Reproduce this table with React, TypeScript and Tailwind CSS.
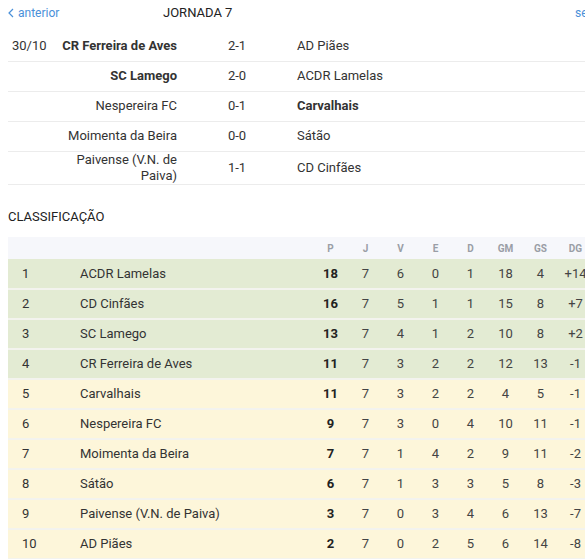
import React from "react";

const matches = [
  { date: "30/10", home: "CR Ferreira de Aves", score: "2-1", away: "AD Piães", win: "home" },
  { date: "", home: "SC Lamego", score: "2-0", away: "ACDR Lamelas", win: "home" },
  { date: "", home: "Nespereira FC", score: "0-1", away: "Carvalhais", win: "away" },
  { date: "", home: "Moimenta da Beira", score: "0-0", away: "Sátão", win: "" },
  { date: "", home: "Paivense (V.N. de Paiva)", score: "1-1", away: "CD Cinfães", win: "" },
];

const standings = [
  [1, "ACDR Lamelas", 18, 7, 6, 0, 1, 18, 4, "+14"],
  [2, "CD Cinfães", 16, 7, 5, 1, 1, 15, 8, "+7"],
  [3, "SC Lamego", 13, 7, 4, 1, 2, 10, 8, "+2"],
  [4, "CR Ferreira de Aves", 11, 7, 3, 2, 2, 12, 13, "-1"],
  [5, "Carvalhais", 11, 7, 3, 2, 2, 4, 5, "-1"],
  [6, "Nespereira FC", 9, 7, 3, 0, 4, 10, 11, "-1"],
  [7, "Moimenta da Beira", 7, 7, 1, 4, 2, 9, 11, "-2"],
  [8, "Sátão", 6, 7, 1, 3, 3, 5, 8, "-3"],
  [9, "Paivense (V.N. de Paiva)", 3, 7, 0, 3, 4, 6, 13, "-7"],
  [10, "AD Piães", 2, 7, 0, 2, 5, 6, 14, "-8"],
];

const cols = ["P", "J", "V", "E", "D", "GM", "GS", "DG"];

export default function App() {
  return (
    <div className="w-[585px] h-[559px] overflow-hidden bg-white text-[#333] font-['Roboto',sans-serif]">
      <div className="w-[601px] px-2">
        {/* ==== nav */}
        <div className="flex items-center h-[26px] text-[12px]">
          <a className="w-[155px] shrink-0 flex items-center gap-[4px] text-[#4a90d9]">
            <svg width="6" height="10" viewBox="0 0 6 10" fill="none">
              <path d="M5 1L1 5l4 4" stroke="#4a90d9" strokeWidth="1.2" />
            </svg>
            anterior
          </a>
          <div className="w-[412px] shrink-0 text-[13px] text-[#222]">JORNADA 7</div>
          <a className="shrink-0 flex items-center gap-[4px] text-[#4a90d9]">
            seguinte
            <svg width="6" height="10" viewBox="0 0 6 10" fill="none">
              <path d="M1 1l4 4-4 4" stroke="#4a90d9" strokeWidth="1.2" />
            </svg>
          </a>
        </div>

        {/* ==== jogos */}
        <table className="mt-[5px] w-[585px] border-collapse text-[13px] leading-[16px]">
          <tbody>
            {matches.map((m, idx) => (
              <tr key={idx} className="h-[30px] border-b border-[#ececec]">
                <td className="w-[50px] px-[4px]">{m.date}</td>
                <td className={`w-[123px] px-[4px] text-right ${m.win === "home" ? "font-bold" : ""}`}>{m.home}</td>
                <td className="w-[112px] px-[4px] text-center">{m.score}</td>
                <td className={`px-[4px] ${m.win === "away" ? "font-bold" : ""}`}>{m.away}</td>
              </tr>
            ))}
          </tbody>
        </table>

        {/* ==== classificação */}
        <div className="mt-[22px] text-[13px] text-[#222]">CLASSIFICAÇÃO</div>
        <table className="mt-[11px] w-[585px] border-collapse text-[13px]">
          <thead>
            <tr className="h-[22px] bg-[#f6f7fb] text-[10px] font-bold text-[#9a9ea6]">
              <th className="w-[72px]"></th>
              <th></th>
              {cols.map((c) => (
                <th key={c} className="w-[35px] text-center font-bold">
                  {c}
                </th>
              ))}
            </tr>
          </thead>
          <tbody>
            {standings.map((r) => {
              const pos = r[0] as number;
              return (
                <tr
                  key={pos}
                  className={`h-[30px] border-b-[2px] border-[#f3f3ee] ${pos <= 4 ? "bg-[#e3ebd3]" : "bg-[#fdf6da]"}`}
                >
                  <td className="pl-[14px]">{pos}</td>
                  <td>{r[1]}</td>
                  <td className="text-center font-bold text-[#222]">{r[2]}</td>
                  {r.slice(3).map((v, i) => (
                    <td key={i} className="text-center text-[#444]">
                      {v}
                    </td>
                  ))}
                </tr>
              );
            })}
          </tbody>
        </table>
      </div>
    </div>
  );
}
